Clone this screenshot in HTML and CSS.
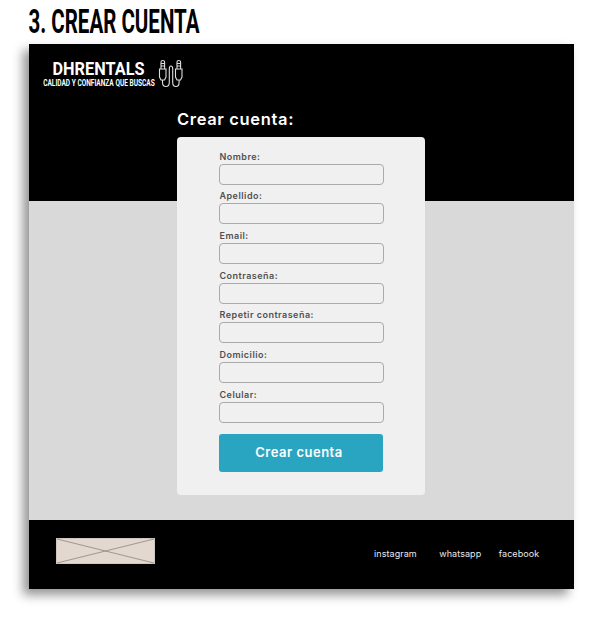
FILE: index.html
```html
<!DOCTYPE html>
<html lang="es">
<head>
<meta charset="utf-8">
<title>Crear cuenta</title>
<link rel="stylesheet" href="styles.css">
</head>
<body>
<svg class="page-title" width="185" height="44" role="heading" aria-level="1">
  <text x="0.5" y="33" textLength="171" lengthAdjust="spacingAndGlyphs">3. CREAR CUENTA</text>
</svg>
<div class="screen">
  <header class="header">
    <svg class="brand" width="150" height="36">
      <text class="brand-name" x="9.5" y="18.700" textLength="92" lengthAdjust="spacingAndGlyphs">DHRENTALS</text>
      <text class="brand-tag" x="0.2" y="29.5" textLength="111.5" lengthAdjust="spacingAndGlyphs">CALIDAD Y CONFIANZA QUE BUSCAS</text>
      <g class="cables">
        <path d="M118 12.500V6q0-1.500 1.800-1.500t1.800 1.500V12.500M118 7.500h3.600M118 10h3.600M116.500 13h6.500v8l-1.500 3h-3.500l-1.500-3zM134 12.500V6q0-1.500 1.800-1.500t1.800 1.500V12.500M134 7.500h3.600M134 10h3.600M132.500 13h6.500v8l-1.500 3h-3.500l-1.500-3z"/>
        <path d="M119.500 24v2.500q0 4 3.400 4t3.400-4V13q0-3 1.700-3t1.700 3v13.500q0 4 3.200 4t3.200-4V24"/>
      </g>
    </svg>
  </header>
  <main class="content">
    <h2 class="heading">Crear cuenta:</h2>
    <form class="card">
      <label class="field">Nombre:<input type="text"></label>
      <label class="field">Apellido:<input type="text"></label>
      <label class="field">Email:<input type="email"></label>
      <label class="field">Contraseña:<input type="password"></label>
      <label class="field">Repetir contraseña:<input type="password"></label>
      <label class="field">Domicilio:<input type="text"></label>
      <label class="field">Celular:<input type="tel"></label>
      <button class="submit" type="button">Crear cuenta</button>
    </form>
  </main>
  <footer class="footer">
    <svg class="placeholder" width="99" height="26" viewBox="0 0 99 26">
      <rect x=".5" y=".5" width="98" height="25"/>
      <path d="M1 1L98 25M1 25L98 1"/>
    </svg>
    <nav class="links"><a>instagram</a><a>whatsapp</a><a>facebook</a></nav>
  </footer>
</div>
</body>
</html>
```
FILE: styles.css
```css
* { box-sizing: border-box; }
body {
  margin: 0;
  height: 620px;
  overflow: hidden;
  background: #fff;
  font-family: Inter, "Liberation Sans", sans-serif;
}
.page-title { display: block; margin-left: 28px; fill: #000; }
.page-title text { font: bold 34px Roboto, sans-serif; }
.screen {
  display: flex;
  flex-direction: column;
  width: 545px;
  height: 545px;
  margin-left: 29px;
  background: linear-gradient(#000 157px, #d9d9d9 157px);
  box-shadow: -6px 6px 10px rgba(0, 0, 0, .42);
}
.header { height: 62px; padding: 12px 0 0 14px; }
.brand { display: block; fill: #fff; }
.brand-name { font: bold 17.500px Roboto, sans-serif; }
.brand-tag { font: bold 8.500px Roboto, sans-serif; }
.cables { fill: none; stroke: #ddd; stroke-width: 1.1; }
.content { flex: 1; padding-left: 148px; }
.heading {
  height: 30.500px;
  margin: 0;
  color: #fff;
  font-size: 16.500px;
  font-weight: 600;
  line-height: 27px;
  letter-spacing: .65px;
}
.card {
  width: 248px;
  height: 358px;
  padding: 14px 41.500px 0 42px;
  border-radius: 4px;
  background: #f0f0f0;
}
.field {
  display: block;
  height: 39.700px;
  color: #505050;
  font-size: 9px;
  font-weight: 600;
  line-height: 11px;
  letter-spacing: .48px;
  text-indent: .5px;
}
.field input {
  display: block;
  width: 165px;
  height: 21px;
  margin: 2px 0 0;
  border: 1px solid #aaa;
  border-radius: 4px;
  background: #f0f0f0;
}
.submit {
  display: block;
  width: 164px;
  height: 38px;
  margin: 6px 0 0;
  padding: 0 4px 2px 0;
  border: 0;
  border-radius: 3px;
  background: #29a5c1;
  color: #fff;
  font: 600 13px Inter, sans-serif;
  letter-spacing: .5px;
}
.footer {
  display: flex;
  justify-content: space-between;
  height: 69px;
  padding: 18px 34.800px 0 27px;
  background: #000;
}
.placeholder { fill: #e2d8d0; stroke: #cfc6bf; }
.placeholder path { stroke: #8d857f; stroke-width: .8; }
.links {
  display: flex;
  color: #e8e8e8;
  font-size: 9px;
  line-height: 31px;
  letter-spacing: .07px;
}
.links a + a { margin-left: 22.500px; }
.links a:last-child { margin-left: 17.500px; }
```
